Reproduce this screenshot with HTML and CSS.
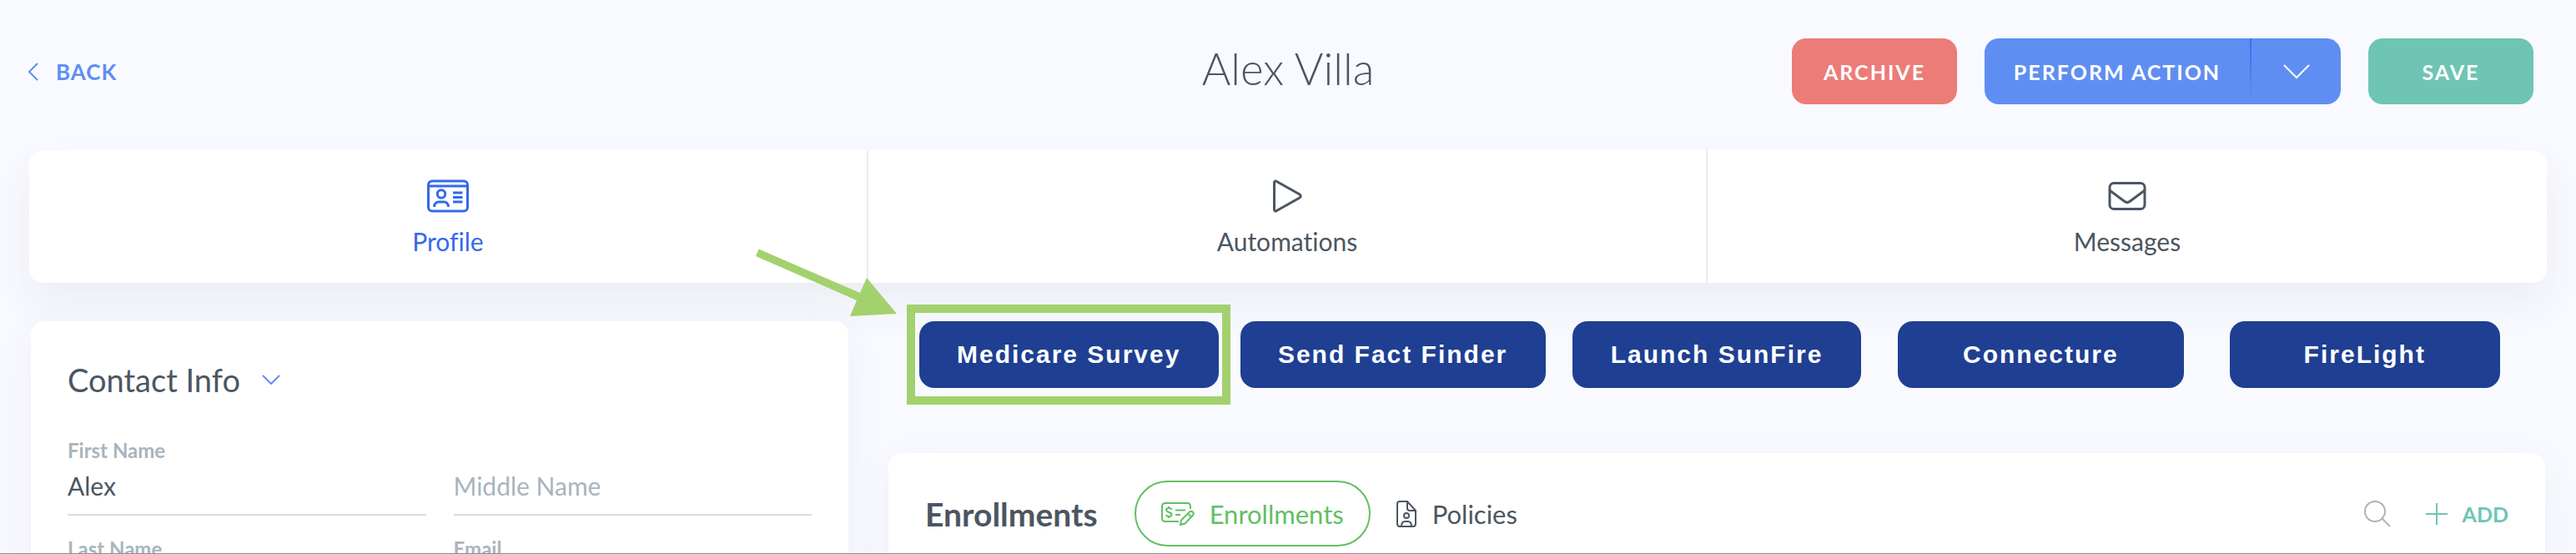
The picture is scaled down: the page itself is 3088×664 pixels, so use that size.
FILE: index.html
```html
<!DOCTYPE html>
<html lang="en">
<head>
<meta charset="utf-8">
<meta name="viewport" content="width=device-width, initial-scale=1">
<title>Alex Villa</title>
<link rel="stylesheet" href="styles.css">
</head>
<body>
<div class="page">
  <header class="topbar">
    <a class="back" href="#"><svg width="14" height="24" viewBox="0 0 14 24"><path d="M12 2 2 12l10 10"/></svg>BACK</a>
    <h1 class="title">Alex Villa</h1>
    <div class="actions">
      <button class="btn btn-archive" type="button">ARCHIVE</button>
      <div class="split">
        <button class="btn split-main" type="button">PERFORM ACTION</button>
        <button class="btn split-toggle" type="button" aria-label="More actions"><svg width="32" height="18" viewBox="0 0 32 18"><path d="M1 1 16 16 31 1"/></svg></button>
      </div>
      <button class="btn btn-save" type="button">SAVE</button>
    </div>
  </header>

  <nav class="tabs">
    <a class="tab tab-active" href="#">
      <svg width="52" height="40" viewBox="0 0 52 40"><rect x="2.5" y="2" width="47" height="36" rx="4.500"/><path d="M3 8h46M9.500 33c0-4.200 3-6 5-6h7c2 0 5 1.800 5 6M32 16h11.500M32 21.500h11.500M32 27h11.500"/><circle cx="18" cy="17.500" r="4.700"/></svg>
      <span>Profile</span>
    </a>
    <a class="tab" href="#">
      <svg width="36" height="40" viewBox="0 0 36 40"><path d="M2.500 4v32c0 2 1.500 2.600 3 1.500L33 22c1.500-1.200 1.500-2.800 0-4L5.500 2.500C4 1.400 2.500 2 2.500 4z"/></svg>
      <span>Automations</span>
    </a>
    <a class="tab" href="#">
      <svg width="46" height="40" viewBox="0 0 46 40"><rect x="2" y="4.500" width="42" height="31" rx="5"/><path d="M2.500 13.500 20 26.500c2 1.500 4 1.500 6 0L43.500 13.500"/></svg>
      <span>Messages</span>
    </a>
  </nav>

  <main class="content">
    <section class="card contact">
      <h2 class="card-title">Contact Info <button class="collapse" type="button" aria-label="Collapse"><svg width="22" height="12" viewBox="0 0 22 12"><path d="M1 1l10 10L21 1"/></svg></button></h2>
      <form class="fields">
        <div class="field"><label for="first">First Name</label><input id="first" type="text" value="Alex"></div>
        <div class="field"><label for="middle"></label><input id="middle" type="text" placeholder="Middle Name" aria-label="Middle Name"></div>
        <div class="field"><label for="last">Last Name</label><input id="last" type="text"></div>
        <div class="field"><label for="email">Email</label><input id="email" type="email"></div>
      </form>
    </section>

    <div class="side">
      <div class="launchers">
        <div class="slot"><button class="launch w-medicare" type="button">Medicare Survey</button>
          <div class="highlight"></div>
          <svg class="arrow" width="181" height="87" viewBox="0 0 181 87"><path d="M3.500.5 125 53 133 35 169 78 113 81 121 62 0 9z"/></svg>
        </div>
        <div class="slot"><button class="launch w-fact" type="button">Send Fact Finder</button></div>
        <div class="slot"><button class="launch w-sunfire" type="button">Launch SunFire</button></div>
        <div class="slot"><button class="launch w-connect" type="button">Connecture</button></div>
        <div class="slot"><button class="launch w-firelight" type="button">FireLight</button></div>
      </div>
      <section class="card enrollments">
        <h2 class="section-title">Enrollments</h2>
        <button class="pill pill-active" type="button">
          <svg width="40" height="28" viewBox="0 0 40 28"><path d="M21 23H5c-2.500 0-4-1.500-4-4V5c0-2.500 1.500-4 4-4h26c2.500 0 4 1.500 4 4v3M17 9.500h12M17 15h6M12.500 9c-.8-2.800-6.300-2.800-6.300.2 0 3.300 6.300 2.200 6.300 5.500 0 3-5.700 3-6.500.2M9.300 5v2M9.300 17v2M23 27l1-5.500L34 11.500c2.500-2.200 6.300 1.500 4 4L28.500 25.500zM32 13.500l4 4"/></svg>
          Enrollments
        </button>
        <button class="pill" type="button">
          <svg width="26" height="32" viewBox="0 0 26 32"><path d="M14 1H5C3 1 2 2.500 2 4v23.500C2 29.500 3 31 5 31h16c2 0 3-1.500 3-3.500V12zM14 1v8c0 2 1 3 3 3h7M7 31c0-4.500 1.500-6 4-6h4c2.500 0 4 1.500 4 6"/><circle cx="13" cy="18" r="3"/></svg>
          Policies
        </button>
        <div class="tools">
          <button class="icon-btn" type="button" aria-label="Search"><svg width="32" height="32" viewBox="0 0 32 32"><circle cx="13" cy="13" r="12"/><path d="M21.500 21.500 31 31"/></svg></button>
          <button class="add" type="button"><svg width="26" height="26" viewBox="0 0 26 26"><path d="M13 0v26M0 13h26"/></svg>ADD</button>
        </div>
      </section>
    </div>
  </main>
</div>
</body>
</html>
```
FILE: styles.css
```css
* { box-sizing: border-box; }
html, body { height: 100%; }
body {
  margin: 0;
  background: #f9faff;
  color: #4b5661;
  font-family: Lato, "Open Sans", sans-serif;
  font-variant-ligatures: none;
}
svg { fill: none; stroke: currentColor; stroke-width: 2; flex: none; }
button { margin: 0; padding: 0; border: 0; background: none; color: inherit; font: inherit; }
a { color: inherit; text-decoration: none; }
.page { height: 100vh; overflow: hidden; border-bottom: 1px solid #8f9093; }

.topbar {
  display: grid;
  grid-template-columns: 1fr auto 1fr;
  align-items: center;
  padding: 46px 33px 0;
}
.back {
  display: flex;
  align-items: center;
  gap: 20px;
  color: #5f8ef3;
  font-size: 26px;
  font-weight: 700;
  letter-spacing: 1px;
}
.title { margin: 0; padding-bottom: 7px; font-size: 53px; line-height: 72px; font-weight: 300; }
.actions { display: flex; justify-content: flex-end; gap: 33px; margin-right: 18px; }
.btn {
  height: 79px;
  border-radius: 17px;
  color: #fff;
  font-size: 25px;
  font-weight: 700;
  letter-spacing: 2px;
}
.btn-archive { width: 198px; background: #ec7c78; }
.btn-save { width: 198px; background: #6ec5b4; }
.split { display: flex; border-radius: 17px; overflow: hidden; background: #5f8ef3; }
.split .btn { border-radius: 0; }
.split-main { width: 318px; }
.split-toggle {
  display: flex;
  align-items: center;
  justify-content: center;
  width: 109px;
  border-left: 2px solid;
  border-image: linear-gradient(#3a6df0, #5f8ef3) 1;
}

.tabs {
  display: grid;
  grid-template-columns: repeat(3, 1fr);
  margin: 55px 35px 0;
  border-radius: 16px;
  background: #fff;
  box-shadow: 0 24px 50px rgba(60, 70, 100, 0.07);
}
.tab {
  display: flex;
  flex-direction: column;
  align-items: center;
  gap: 16px;
  height: 159px;
  padding-top: 35px;
  border-right: 2px solid #ececee;
  font-size: 30px;
  line-height: 36px;
}
.tab svg { stroke-width: 3; }
.tab:last-child { border-right: 0; }
.tab-active { color: #3569ea; }

.content { display: grid; grid-template-columns: 980fr 1986fr; gap: 48px; padding: 46px 37px 0; }
.card { border-radius: 16px; background: #fff; box-shadow: 0 12px 50px rgba(60, 70, 120, 0.06); }
.contact { padding: 45px 44px 0; }
.card-title {
  display: flex;
  align-items: center;
  gap: 26px;
  margin: 0;
  font-size: 38px;
  line-height: 50px;
  font-weight: 400;
}
.collapse { display: flex; color: #5f8ef3; }
.fields { display: grid; grid-template-columns: 1fr 1fr; gap: 26px 33px; margin-top: 46px; }
.field label { display: block; height: 28px; color: #a9b4bd; font-size: 24px; line-height: 28px; font-weight: 700; }
.field input {
  display: block;
  width: 100%;
  height: 64px;
  padding: 0 0 6px;
  border: 0;
  border-bottom: 2px solid #d9dde3;
  background: none;
  color: #4b5661;
  font: 30px/36px Lato, "Open Sans", sans-serif;
}
.field input::placeholder { color: #a9b4bd; opacity: 1; }

.launchers { display: grid; grid-template-columns: repeat(5, 1fr); padding: 0 22px; }
.slot { position: relative; display: flex; justify-content: center; }
.launch {
  height: 80px;
  border-radius: 18px;
  background: #1f3f92;
  color: #fff;
  font: 700 30px/36px "Liberation Sans", Arial, sans-serif;
  letter-spacing: 2px;
}
.w-medicare { width: 359px; }
.w-fact { width: 366px; }
.w-sunfire { width: 346px; }
.w-connect { width: 343px; }
.w-firelight { width: 324px; }
.highlight { position: absolute; inset: -20px 0; border: 10px solid #a3d16e; }
.arrow { position: absolute; right: 100%; bottom: 100%; fill: #a3d16e; stroke: none; }

.enrollments {
  display: flex;
  align-items: center;
  height: 200px;
  margin-top: 78px;
  padding: 33px 44px 88px;
}
.section-title { margin: 0 44px 0 0; font-size: 39px; font-weight: 700; line-height: 48px; }
.pill {
  display: flex;
  align-items: center;
  gap: 18px;
  height: 79px;
  padding: 0 30px;
  font-size: 31px;
}
.pill-active { border: 2px solid #62bf63; border-radius: 40px; color: #62bf63; }
.tools { display: flex; align-items: center; gap: 42px; margin-left: auto; }
.icon-btn { display: flex; color: #a9b4bd; }
.add { display: flex; align-items: center; gap: 18px; color: #6ec5b4; font-size: 25px; font-weight: 700; }
```
